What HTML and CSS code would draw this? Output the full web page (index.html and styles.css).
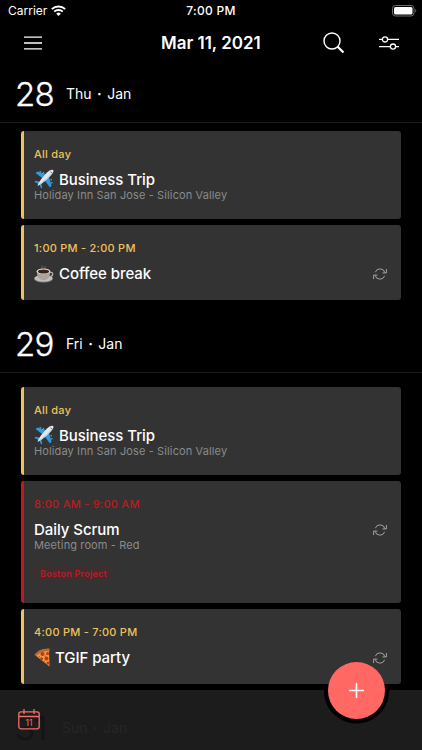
FILE: index.html
```
<!DOCTYPE html>
<html lang="en">
<head>
  <meta charset="UTF-8" />
  <meta name="viewport" content="width=device-width, initial-scale=1.0"/>
  <title>Agenda</title>
  <link rel="stylesheet" href="styles.css">
</head>
<body>
  <!-- shared icons -->
  <svg class="defs" width="0" height="0">
    <symbol id="repeat" viewBox="0 0 14 12">
      <g fill="none" stroke="#a3a3a3" stroke-width="1">
        <path d="M2.3 4.2A5 5 0 0 1 11.9 4.7M11.7 7.8A5 5 0 0 1 2.1 7.3"/>
        <path d="M13.4 1v3.9H9.6M.6 11V7.1h3.8"/>
      </g>
    </symbol>
    <symbol id="plane" viewBox="0 0 20 20">
      <path d="M1.500 4l2-1.500 10 3-4 4.500zM16 18.500l1.500-2-3-10-4.500 4z" fill="#2d9be0"/>
      <path d="M.500 13l1-1.200 5.500 1.200-1 2.500zM7 19.500l1.200-1-1.200-5.500-2 1z" fill="#2d9be0"/>
      <path d="M6 3.600l.4-1.600M9 4.500l.5-1.600M16.300 11l1.600-.5M17 14l1.600-.4" stroke="#64add8" stroke-width="1.1"/>
      <path d="M3.500 16.700C4.500 13 12.500 3 16 1.300c2-1 3.900-.5 3.500 1.200C18.500 6 8.500 15.500 3.500 16.700z" fill="#e4e7ea"/>
      <path d="M3.500 16.700C8 15 18.500 5.500 19.300 2.800C15 8 9 13 3.500 16.700z" fill="#a9b0b7"/>
      <path d="M16.500 2.700l1.800 1.300" stroke="#4c6070" stroke-width=".8"/>
    </symbol>
    <symbol id="coffee" viewBox="0 0 20 18">
      <path d="M8 4C6.500 2.500 9.500 2 8 .5M11 4C9.500 2.500 12 2 11 1" fill="none" stroke="#777" stroke-width=".8"/>
      <ellipse cx="9.500" cy="14" rx="9.200" ry="3.500" fill="#8f8983"/>
      <ellipse cx="9.500" cy="13.300" rx="9.200" ry="3.200" fill="#c4beb7"/>
      <path d="M16 7.500c4-1 3.500 4.500-1 4" fill="none" stroke="#bbb5ae" stroke-width="1.200"/>
      <path d="M2.800 6.500c0 5 2.500 8.700 6.700 8.700s6.700-3.700 6.700-8.700z" fill="#aaa49d"/>
      <ellipse cx="9.500" cy="6.300" rx="6.800" ry="2.900" fill="#e5e0da"/>
      <ellipse cx="9.500" cy="6.500" rx="5.700" ry="2.100" fill="#38231b"/>
    </symbol>
    <symbol id="pizza" viewBox="0 0 17 20">
      <path d="M1 7C4 2.500 9 .500 15 1l.500 17.500z" fill="#e99a3b"/>
      <path d="M.500 6.500C4 2 9 0 15.500.500l.300 2.500C10 3 5.500 4.500 2 8.200z" fill="#b46a32"/>
      <g fill="#c8321f">
        <circle cx="8.500" cy="6" r="2"/><circle cx="13.600" cy="5.500" r="1.600"/>
        <circle cx="7.500" cy="10.800" r="1.500"/><circle cx="12.500" cy="10.500" r="2"/><circle cx="14" cy="15" r="1.500"/>
      </g>
      <path d="M10.800 8.300l1.200-.5M10 13l1 .4M5 8.200l1 .5" stroke="#5f7330" stroke-width="1"/>
    </symbol>
  </svg>

  <div class="screen">
    <div class="status">
      <span class="carrier">Carrier</span>
      <svg class="wifi" width="15" height="11" viewBox="0 0 15 11">
        <g fill="none" stroke="#fff" stroke-width="1.900">
          <path d="M.8 4.200a9.500 9.500 0 0 1 13.400 0M3.200 6.700a6.100 6.100 0 0 1 8.600 0"/>
        </g>
        <path d="M7.500 11L5.200 8.700a3.300 3.300 0 0 1 4.600 0z" fill="#fff"/>
      </svg>
      <span class="clock">7:00 PM</span>
      <svg class="battery" width="25" height="12" viewBox="0 0 25 12">
        <rect x=".5" y=".5" width="21.500" height="10.500" rx="3" fill="none" stroke="#6d6d6d"/>
        <rect x="2" y="2" width="18.500" height="7.500" rx="1.500" fill="#fff"/>
        <path d="M23.300 4c1.300.6 1.300 3 0 3.600z" fill="#777"/>
      </svg>
    </div>

    <div class="header">
      <svg class="menu" width="18" height="14" viewBox="0 0 18 14">
        <path d="M0 1.200h18M0 7h18M0 12.800h18" stroke="#fff" stroke-width="1.300"/>
      </svg>
      <h1>Mar 11, 2021</h1>
      <svg class="search" width="22" height="22" viewBox="0 0 22 22">
        <circle cx="9" cy="9" r="8" fill="none" stroke="#fff" stroke-width="1.400"/>
        <path d="M14.700 14.700L20.500 20.500" stroke="#fff" stroke-width="2.200"/>
      </svg>
      <svg class="filter" width="20" height="14" viewBox="0 0 20 14">
        <g fill="none" stroke="#fff" stroke-width="1.300">
          <path d="M0 3.400h3.300M8.700 3.400H20M0 10.600h11.300M16.700 10.600H20"/>
          <circle cx="6" cy="3.400" r="2.600"/><circle cx="14" cy="10.600" r="2.600"/>
        </g>
      </svg>
    </div>

    <div class="day">
      <span class="num">28</span><span class="name">Thu <b>·</b> Jan</span>
    </div>
    <div class="events">
      <div class="card allday">
        <div class="time">All day</div>
        <div class="title"><svg class="emoji" width="20" height="20"><use href="#plane"/></svg>Business Trip</div>
        <div class="place">Holiday Inn San Jose - Silicon Valley</div>
      </div>
      <div class="card">
        <div class="time">1:00 PM - 2:00 PM</div>
        <div class="title"><svg class="emoji" width="20" height="18"><use href="#coffee"/></svg>Coffee break
          <svg class="repeat" width="14" height="12"><use href="#repeat"/></svg></div>
      </div>
    </div>

    <div class="day second">
      <span class="num">29</span><span class="name">Fri <b>·</b> Jan</span>
    </div>
    <div class="events spaced">
      <div class="card allday">
        <div class="time">All day</div>
        <div class="title"><svg class="emoji" width="20" height="20"><use href="#plane"/></svg>Business Trip</div>
        <div class="place">Holiday Inn San Jose - Silicon Valley</div>
      </div>
      <div class="card red">
        <div class="time">8:00 AM - 9:00 AM</div>
        <div class="title">Daily Scrum
          <svg class="repeat" width="14" height="12"><use href="#repeat"/></svg></div>
        <div class="place">Meeting room - Red</div>
        <span class="tag">Boston Project</span>
      </div>
      <div class="card">
        <div class="time">4:00 PM - 7:00 PM</div>
        <div class="title"><svg class="emoji pizza" width="17" height="20"><use href="#pizza"/></svg>TGIF party
          <svg class="repeat" width="14" height="12"><use href="#repeat"/></svg></div>
      </div>
    </div>

    <!-- next day, barely visible through the tab bar -->
    <div class="day last">
      <span class="num">31</span><span class="name">Sun <b>·</b> Jan</span>
    </div>

    <div class="tabbar">
      <svg class="calendar" width="22" height="21" viewBox="0 0 22 21">
        <g fill="none" stroke="#f26d69" stroke-width="1.300">
          <rect x=".8" y="2.800" width="20.400" height="17" rx="2.200"/>
          <path d="M1 7.500h20M6 0v5M16 0v5"/>
        </g>
        <text x="11" y="16.500" text-anchor="middle">11</text>
      </svg>
    </div>
    <div class="fab">
      <svg width="15" height="15" viewBox="0 0 15 15">
        <path d="M7.500.700v13.600M.700 7.500h13.600" stroke="#fff" stroke-width="1.600" stroke-linecap="round"/>
      </svg>
    </div>
  </div>
</body>
</html>
```

FILE: styles.css
```
* {
  box-sizing: border-box;
}
body {
  margin: 0;
  background: #000;
  color: #fff;
  font-family: Inter, "Liberation Sans", sans-serif;
}
svg {
  display: block;
  flex: none;
}
.defs {
  position: absolute;
}
.screen {
  position: relative;
  width: 422px;
  height: 750px;
  overflow: hidden;
}
.status {
  display: grid;
  grid-template-columns: 43px 1fr auto 1fr 24px;
  align-items: center;
  height: 21px;
  padding: 0 6px 0 8px;
  font-size: 12px;
}
.clock {
  font-weight: 500;
  letter-spacing: 0.3px;
  margin-left: -21px;
}
.battery {
  grid-column: 5;
}
.header {
  display: grid;
  grid-template-columns: 18px 1fr 22px 20px;
  align-items: center;
  height: 44px;
  padding: 0 23px 0 24px;
}
.header h1 {
  margin: 0;
  padding-left: 119px;
  font-size: 17px;
  font-weight: 600;
  line-height: 20px;
  white-space: nowrap;
}
.search {
  margin-left: -34px;
}
.day {
  display: flex;
  align-items: center;
  height: 58px;
  padding: 0 15px;
  border-bottom: 1px solid #1b1b1b;
}
.day .num {
  width: 51px;
  font-size: 33px;
  font-weight: 300;
  letter-spacing: -0.8px;
  -webkit-text-stroke: 0.3px currentColor;
}
.day .name {
  font-size: 14px;
  word-spacing: 1.5px;
}
.second {
  margin-top: 15px;
}
.events {
  display: flex;
  flex-direction: column;
  gap: 6px;
  padding: 8px 21px 0;
}
.spaced {
  padding-top: 14px;
}
.card {
  height: 75px;
  padding: 15px 14px 0 10px;
  background: #333;
  border-left: 3px solid #eec25a;
  border-radius: 3px;
}
.allday {
  height: 88px;
}
.time {
  color: #eec25a;
  font-size: 11px;
  font-weight: 500;
  line-height: 16px;
  letter-spacing: 0.25px;
}
.title {
  display: flex;
  align-items: center;
  height: 19px;
  margin-top: 8px;
  font-size: 15px;
  font-weight: 500;
  letter-spacing: -0.05px;
}
.allday .title {
  height: 18px;
  margin-bottom: 1px;
}
.emoji {
  margin-right: 5px;
}
.pizza {
  margin-right: 4px;
}
.repeat {
  margin-left: auto;
}
.place {
  color: #8b8b8b;
  font-size: 11px;
  line-height: 13px;
  letter-spacing: 0.12px;
}
.red {
  height: 122px;
  border-color: #c31820;
}
.red .time {
  color: #bd1b22;
}
.tag {
  display: block;
  width: 79px;
  margin-top: 14px;
  color: #bd1b22;
  background: #3c2f30;
  border-radius: 3px;
  font-size: 9px;
  font-weight: 600;
  line-height: 15px;
  letter-spacing: 0.25px;
  text-align: center;
}
.last {
  position: relative;
  z-index: 1;
  margin-top: 15px;
  color: #262626;
}
.last .num {
  width: 47px;
  color: #141414;
}
.tabbar {
  position: absolute;
  left: 0;
  right: 0;
  bottom: 0;
  height: 60px;
  padding: 19px 18px;
  background: radial-gradient(circle at 356.5px 1px, #000 32px, #1c1c1c 33px);
}
.calendar {
  position: relative;
  z-index: 2;
}
.calendar text {
  fill: #f26d69;
  font-size: 8.5px;
}
.fab {
  position: absolute;
  z-index: 2;
  left: 328px;
  top: 662px;
  display: flex;
  align-items: center;
  justify-content: center;
  width: 57px;
  height: 57px;
  background: #ff6863;
  border-radius: 50%;
}
```
